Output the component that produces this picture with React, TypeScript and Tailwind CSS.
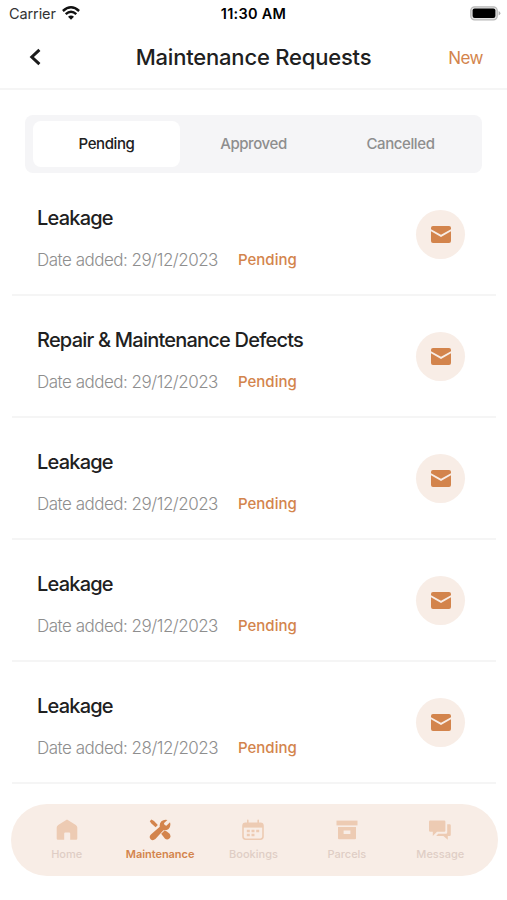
import type { ReactNode } from "react";

const requests = [
  { title: "Leakage", date: "29/12/2023" },
  { title: "Repair & Maintenance Defects", date: "29/12/2023" },
  { title: "Leakage", date: "29/12/2023" },
  { title: "Leakage", date: "29/12/2023" },
  { title: "Leakage", date: "28/12/2023" },
];

function WifiIcon() {
  return (
    <svg width="18" height="14" viewBox="0 0 18 14" className="-mt-[2px]" fill="none" stroke="#111" strokeWidth="2.4">
      <path d="M0.9 5 Q9 -2.4 17.1 5" />
      <path d="M3.7 8.2 Q9 3.4 14.3 8.2" />
      <path d="M9 13.8 L6 10.7 Q9 8.2 12 10.7 Z" fill="#111" stroke="none" />
    </svg>
  );
}

function BatteryIcon() {
  return (
    <svg width="31" height="15" viewBox="0 0 31 15">
      <rect x="0.8" y="0.8" width="26.4" height="13" rx="3.8" fill="#e4e4e4" stroke="#b8b8b8" strokeWidth="1.3" />
      <rect x="2.6" y="2.6" width="22.8" height="9.4" rx="2" fill="#000" />
      <path d="M28.6 5 Q30.4 5.8 30.4 7.3 Q30.4 8.8 28.6 9.6 Z" fill="#b0b0b0" />
    </svg>
  );
}

function MailIcon() {
  return (
    <svg width="20" height="17" viewBox="0 0 20 17" fill="#d3844c">
      <path d="M2 0 H18 Q20 0 20 2 V3.2 L10 8.8 L0 3.2 V2 Q0 0 2 0 Z" />
      <path d="M0 5.2 L10 11 L20 5.2 V15 Q20 17 18 17 H2 Q0 17 0 15 Z" />
    </svg>
  );
}

function HomeIcon() {
  return (
    <svg width="22" height="22" viewBox="0 0 22 22" fill="#edcbb3">
      <path d="M11 0.6 L19.8 6 Q21.3 7 21.3 8.6 V19.6 Q21.3 20.8 20.1 20.8 H14.2 V14.6 Q14.2 13.6 13.2 13.6 H9.2 Q8.2 13.6 8.2 14.6 V20.8 H1.9 Q0.7 20.8 0.7 19.6 V8.6 Q0.7 7 2.2 6 Z" />
    </svg>
  );
}

function ToolsIcon() {
  return (
    <svg width="22" height="22" viewBox="0 0 22 22" fill="#d3844c">
      {/* screwdriver */}
      <path d="M2.4 0.6 L5 2 L8.8 6 L6.6 8.2 L2.4 4.6 L0.8 2.2 Z" />
      <path d="M12.2 14.8 L15.6 11.6 Q17.6 11.8 20.6 14.8 Q22.4 17.4 20.4 19.6 Q18.2 21.6 15.8 19.6 Z" />
      {/* wrench */}
      <path d="M18.4 0.9 L14.9 4.3 Q15.2 6.3 17.4 6.8 L21 3.3 Q22.2 7.4 19.6 9.9 Q17.6 11.6 14.4 11.2 L6.4 20 Q3.8 22.2 1.6 20.2 Q-0.4 17.8 1.9 15.5 L10.8 7.8 Q10.2 4.4 12.4 2.2 Q15 0 18.4 0.9 Z" />
    </svg>
  );
}

function CalendarIcon() {
  return (
    <svg width="22" height="22" viewBox="0 0 22 22" fill="none" stroke="#edcbb3" strokeWidth="1.6">
      <path d="M5.8 1.4 V5 M16.2 1.4 V5" strokeLinecap="round" />
      <rect x="1" y="4.4" width="20" height="15.8" rx="2.6" />
      <path d="M1 6.8 H21" strokeWidth="3.6" />
      <path d="M4.8 12 H7.8 M9.5 12 H12.5 M14.2 12 H17.2 M4.8 16 H7.8 M9.5 16 H12.5" strokeWidth="2.6" />
    </svg>
  );
}

function ParcelIcon() {
  return (
    <svg width="22" height="22" viewBox="0 0 22 22" fill="#edcbb3">
      <path d="M0.5 1.6 H21.5 V6.4 H0.5 Z" />
      <path fillRule="evenodd" d="M2 8 H20 V19.2 Q20 20.2 19 20.2 H3 Q2 20.2 2 19.2 Z M7.6 11.6 V15 H14.4 V11.6 Z" />
    </svg>
  );
}

function MessageIcon() {
  return (
    <svg width="22" height="22" viewBox="0 0 22 22" fill="#edcbb3">
      <path d="M1.2 1.6 H15.2 Q16.4 1.6 16.4 2.8 V11.6 Q16.4 12.8 15.2 12.8 H8 L3.8 17 V12.8 H1.2 Q0 12.8 0 11.6 V2.8 Q0 1.6 1.2 1.6 Z" />
      <path d="M18.2 5.2 H20.6 Q21.8 5.2 21.8 6.4 V15.8 Q21.8 17 20.6 17 H18.8 V20.8 L14.4 17 H7.2 L9.2 14.8 H17 Q18.2 14.8 18.2 13.6 Z" />
    </svg>
  );
}

const tabs: { label: string; icon: ReactNode; active?: boolean }[] = [
  { label: "Home", icon: <HomeIcon /> },
  { label: "Maintenance", icon: <ToolsIcon />, active: true },
  { label: "Bookings", icon: <CalendarIcon /> },
  { label: "Parcels", icon: <ParcelIcon /> },
  { label: "Message", icon: <MessageIcon /> },
];

export default function App() {
  return (
    <div className="flex h-[900px] w-full flex-col overflow-hidden bg-white font-['Inter',sans-serif] text-[#202020]">
      {/* Status bar */}
      <div className="grid h-[27px] shrink-0 grid-cols-3 items-center pr-[6px] pl-[9px]">
        <div className="flex items-center gap-[6px] text-[14.5px] tracking-[-0.1px] text-[#333]">
          Carrier
          <WifiIcon />
        </div>
        <div className="-ml-[3px] text-center text-[14.5px] font-semibold tracking-[0.25px] text-black">11:30 AM</div>
        <div className="flex justify-end">
          <BatteryIcon />
        </div>
      </div>

      {/* Header */}
      <header className="grid h-[63px] shrink-0 grid-cols-[1fr_auto_1fr] items-center border-b-2 border-[#f5f5f5] px-[24px] pb-px">
        <button aria-label="Back" className="pl-[5px]">
          <svg width="12" height="18" viewBox="0 0 12 18" fill="none" stroke="#1b1b1b" strokeWidth="3">
            <path d="M10.4 1.8 L2.8 9 L10.4 16.2" />
          </svg>
        </button>
        <h1 className="text-[22px] font-medium tracking-[-0.2px] whitespace-nowrap">Maintenance Requests</h1>
        <button className="pt-[3px] text-right text-[17px] tracking-[-0.5px] text-[#d3844c]">New</button>
      </header>

      {/* Filter */}
      <div className="mx-[25px] mt-[25px] grid h-[58px] shrink-0 grid-cols-3 rounded-lg bg-[#f5f5f7] px-[8px] py-[6px] text-[15px] font-medium tracking-[-0.4px] text-[#8e8e8e]">
        <button className="rounded-lg bg-white text-[#202020]">Pending</button>
        <button>Approved</button>
        <button>Cancelled</button>
      </div>

      {/* Requests */}
      <ul className="mt-px mr-[11px] ml-[12px] shrink-0">
        {requests.map((r, i) => (
          <li key={i} className="flex h-[122px] items-center justify-between border-b-2 border-[#f5f5f5] pr-[31px] pl-[25px]">
            <div className="pt-[7px]">
              <h2 className="text-[20px] leading-[28px] font-medium tracking-[-0.78px]">{r.title}</h2>
              <div className="mt-[16px] flex items-center leading-[24px]">
                <span className="w-[201px] text-[17px] font-light tracking-[-0.5px] whitespace-nowrap text-[#8e8e8e]">Date added: {r.date}</span>
                <span className="text-[15px] font-medium text-[#d3844c]">Pending</span>
              </div>
            </div>
            <button aria-label="Message" className="flex size-[49px] items-center justify-center rounded-full bg-[#f8ede6]">
              <MailIcon />
            </button>
          </li>
        ))}
      </ul>

      {/* Bottom navigation */}
      <nav className="mt-[20px] mr-[9px] ml-[11px] grid h-[72px] shrink-0 grid-cols-5 rounded-full bg-[#f8ede6] pr-[11px] pl-[9px]">
        {tabs.map((t) => (
          <button key={t.label} className="flex flex-col items-center pt-[15px]">
            {t.icon}
            <span className={t.active ? "mt-[6px] text-[11px] leading-[14px] font-semibold tracking-[-0.05px] text-[#d3844c]" : "mt-[6px] text-[11px] leading-[14px] font-medium text-[#dfcdc5]"}>{t.label}</span>
          </button>
        ))}
      </nav>
    </div>
  );
}
